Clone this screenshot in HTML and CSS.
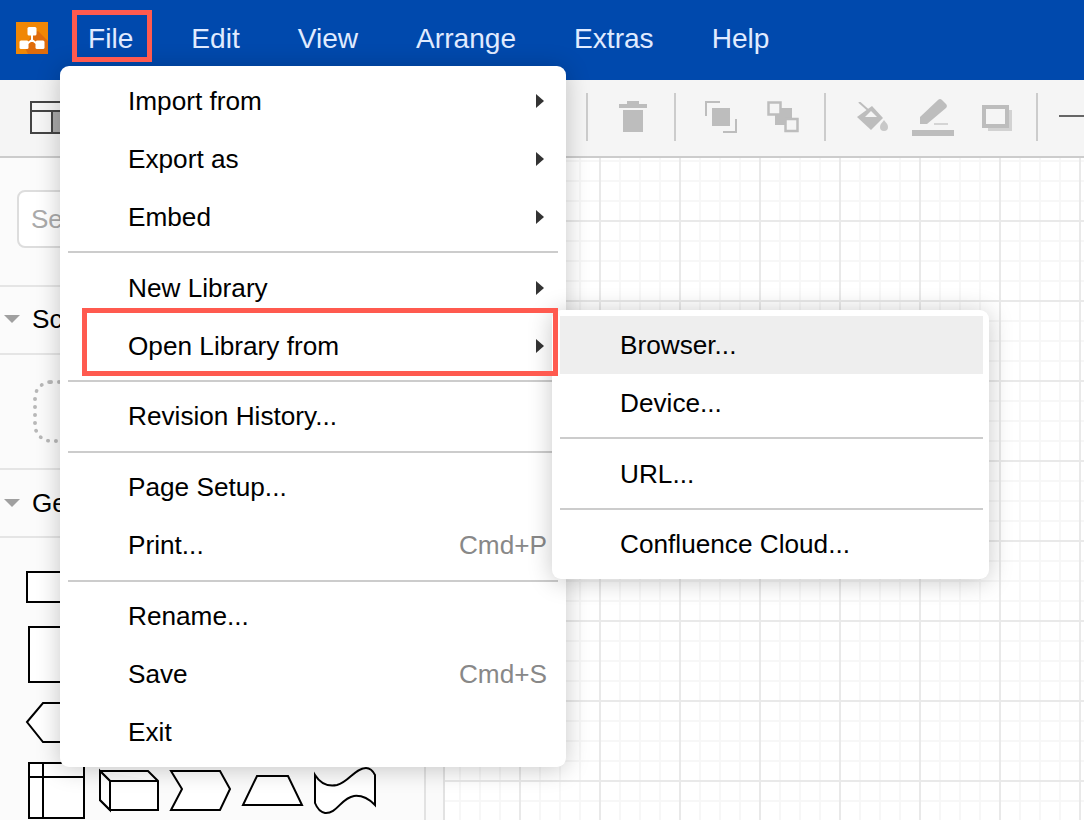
FILE: index.html
```html
<!DOCTYPE html>
<html lang="en">
<head>
  <meta charset="UTF-8" />
  <title>draw.io - File menu</title>
  <link rel="stylesheet" href="styles.css">
</head>
<body>
  <header class="menubar">
    <svg class="logo" width="32" height="32" viewBox="0 0 32 32">
      <rect width="32" height="32" fill="#f08705"/>
      <path d="M32 32H12L9 26l7-14 6-3 10 10z" fill="#df6c0c"/>
      <path d="M16 13v7M8 24l8-6 8 6" fill="none" stroke="#fff" stroke-width="2"/>
      <rect x="11.500" y="5" width="9" height="8.500" rx="1.500" fill="#fff"/>
      <rect x="3.500" y="18.500" width="9" height="8.500" rx="1.500" fill="#fff"/>
      <rect x="19.500" y="18.500" width="9" height="8.500" rx="1.500" fill="#fff"/>
    </svg>
    <nav class="menubar-items">
      <span>File</span>
      <span>Edit</span>
      <span>View</span>
      <span>Arrange</span>
      <span>Extras</span>
      <span>Help</span>
    </nav>
  </header>

  <div class="toolbar">
    <svg class="tool-view" width="40" height="36" viewBox="0 0 40 36">
      <rect x="22" y="11" width="18" height="22" fill="#aaa"/>
      <path d="M1 2h38v31H1zM1 11h38M22 11v22" fill="none" stroke="#444" stroke-width="2"/>
    </svg>
    <i class="tb-sep sep-a"></i>
    <svg class="tool-trash" width="28" height="32" viewBox="0 0 28 32">
      <path d="M8 1h12v3h8v4H0V4h8zM4 10h20v22H4z" fill="#bdbdbd"/>
    </svg>
    <i class="tb-sep sep-b"></i>
    <svg class="tool-front" width="32" height="32" viewBox="0 0 32 32">
      <path d="M15 1H1v14M31 18v13H18" fill="none" stroke="#bdbdbd" stroke-width="2"/>
      <rect x="7" y="7" width="18" height="18" fill="#bdbdbd"/>
    </svg>
    <svg class="tool-back" width="32" height="32" viewBox="0 0 32 32">
      <rect x="8" y="7" width="17" height="17" fill="#bdbdbd"/>
      <rect x="1.500" y="1.500" width="12" height="12" fill="#f5f5f5" stroke="#bdbdbd" stroke-width="2.500"/>
      <rect x="18.500" y="18" width="12" height="12" fill="#f5f5f5" stroke="#bdbdbd" stroke-width="2.500"/>
    </svg>
    <i class="tb-sep sep-c"></i>
    <svg class="tool-fill" width="33" height="29" viewBox="0 0 33 29">
      <path d="M3 0l9 8" fill="none" stroke="#bdbdbd" stroke-width="2"/>
      <path d="M16 4l11 12-12 12L1 15z" fill="#bdbdbd"/>
      <path d="M15 9l6 6H9z" fill="#f5f5f5"/>
      <path d="M28 18c2 3 4 4 4 7a4 4 0 0 1-8 0c0-3 2-4 4-7z" fill="#c8c8c8"/>
    </svg>
    <svg class="tool-line" width="42" height="37" viewBox="0 0 42 37">
      <rect y="31" width="42" height="6" fill="#bdbdbd"/>
      <path d="M8 25v-7L26 1a3 3 0 0 1 4 0l4 4a3 3 0 0 1 0 4L15 25z" fill="#bdbdbd"/>
      <path d="M22 25h14" stroke="#c8c8c8" stroke-width="1.500"/>
    </svg>
    <svg class="tool-shadow" width="31" height="26" viewBox="0 0 31 26">
      <path d="M6 26h24V5h-4v15H6z" fill="#d2d2d2"/>
      <rect x="2" y="2" width="23" height="19" fill="none" stroke="#bdbdbd" stroke-width="4"/>
    </svg>
    <i class="tb-sep sep-d"></i>
    <div class="tool-conn"></div>
  </div>

  <div class="main">
    <aside class="sidebar">
      <div class="search-wrap">
        <div class="search">Search</div>
      </div>
      <div class="section-head"><i class="caret"></i>Scratchpad</div>
      <div class="scratch">
        <div class="scratch-drop"></div>
      </div>
      <div class="section-head"><i class="caret"></i>General</div>
      <div class="shapes">
        <svg class="row-a" width="400" height="34" viewBox="0 570 400 34">
          <rect x="27" y="572" width="120" height="30"/>
        </svg>
        <svg class="row-b" width="400" height="59" viewBox="0 625 400 59">
          <rect x="29" y="627" width="80" height="55"/>
        </svg>
        <svg class="row-c" width="400" height="43" viewBox="0 701 400 43">
          <path d="M27 722l16-19h60l16 19-16 20H43z"/>
        </svg>
        <svg class="row-d" width="400" height="59" viewBox="0 761 400 59">
          <path d="M29 763h55v55H29zM29 777h55M43 763v55"/>
          <path d="M100 771l10 10v29l-10-10z" class="shape-side"/>
          <path d="M100 771h48l10 10v29h-48l-10-10zM100 771l10 10h48M110 781v29"/>
          <path d="M171 771h49l10 18-10 21h-49l11-21z"/>
          <path d="M243 805l14-29h31l14 29z"/>
          <path d="M315 775c5 8 12 12 22 10 12-3 18-17 29-17 4 0 7 3 9 7v30c-6-6-12-10-21-9-13 2-17 18-29 17-5-1-8-5-10-10z"/>
        </svg>
      </div>
    </aside>
    <div class="splitter"></div>
    <div class="canvas"></div>
  </div>

  <div class="menu file-menu">
    <div class="menu-item">Import from<i class="arrow"></i></div>
    <div class="menu-item">Export as<i class="arrow"></i></div>
    <div class="menu-item">Embed<i class="arrow"></i></div>
    <div class="menu-sep"></div>
    <div class="menu-item">New Library<i class="arrow"></i></div>
    <div class="menu-item">Open Library from<i class="arrow"></i></div>
    <div class="menu-sep"></div>
    <div class="menu-item">Revision History...</div>
    <div class="menu-sep"></div>
    <div class="menu-item">Page Setup...</div>
    <div class="menu-item">Print...<span class="shortcut">Cmd+P</span></div>
    <div class="menu-sep"></div>
    <div class="menu-item">Rename...</div>
    <div class="menu-item">Save<span class="shortcut">Cmd+S</span></div>
    <div class="menu-item">Exit</div>
  </div>

  <div class="menu sub-menu">
    <div class="menu-item active">Browser...</div>
    <div class="menu-item">Device...</div>
    <div class="menu-sep"></div>
    <div class="menu-item">URL...</div>
    <div class="menu-sep"></div>
    <div class="menu-item">Confluence Cloud...</div>
  </div>

  <div class="callout callout-file"></div>
  <div class="callout callout-open"></div>
</body>
</html>
```

FILE: styles.css
```css
* {
  box-sizing: border-box;
}
body {
  margin: 0;
  width: 1084px;
  height: 820px;
  overflow: hidden;
  position: relative;
  font-family: "Liberation Sans", Arial, sans-serif;
  background-color: #fff;
  color: #000;
}

/* top bar */
.menubar {
  height: 80px;
  background-color: #0049ad;
  display: flex;
  align-items: center;
  padding-left: 16px;
}
.logo {
  flex-shrink: 0;
  margin-top: -4px;
}
.menubar-items {
  display: flex;
  gap: 58px;
  margin-left: 40px;
  font-size: 28.100px;
  color: #e0ebff;
  margin-top: -3px;
}

/* toolbar */
.toolbar {
  height: 78px;
  background-color: #f5f5f5;
  border-bottom: 2px solid #ccc;
  display: flex;
  align-items: center;
  padding-left: 30px;
  overflow: hidden;
}
.toolbar svg {
  flex-shrink: 0;
  display: block;
}
.tb-sep {
  flex-shrink: 0;
  width: 2px;
  height: 48px;
  background-color: #ccc;
  margin-top: -2px;
}
.tool-view { margin-top: -1px; }
.sep-a { margin-left: 516px; }
.tool-trash { margin-left: 31px; margin-top: -4px; }
.sep-b { margin-left: 27px; }
.tool-front { margin-left: 29px; margin-top: -2px; }
.tool-back { margin-left: 30px; margin-top: -2px; }
.sep-c { margin-left: 25px; }
.tool-fill { margin-left: 30px; margin-top: -4px; }
.tool-line { margin-left: 23px; margin-top: -2px; }
.tool-shadow { margin-left: 28px; margin-top: 0; }
.sep-d { margin-left: 23px; }
.tool-conn {
  flex-shrink: 0;
  width: 25px;
  height: 2px;
  margin-left: 21px;
  margin-top: -4px;
  background-color: #666;
}

/* main area */
.main {
  display: flex;
  height: 662px;
}
.sidebar {
  width: 426px;
  background-color: #fbfbfb;
  border-right: 2px solid #e2e2e2;
  overflow: hidden;
}
.search-wrap {
  height: 127px;
  padding: 32px 0 0 17px;
}
.search {
  width: 380px;
  height: 58px;
  border: 2px solid #ddd;
  border-radius: 8px;
  background-color: #fff;
  padding-left: 12px;
  line-height: 54px;
  font-size: 26px;
  color: #aaa;
}
.section-head {
  height: 70px;
  border-top: 2px solid #e5e5e5;
  border-bottom: 2px solid #e5e5e5;
  display: flex;
  align-items: center;
  padding: 0 0 2px 4px;
  font-size: 26.200px;
}
.scratch + .section-head {
  padding-bottom: 0;
}
.caret {
  width: 0;
  height: 0;
  border-left: 8px solid transparent;
  border-right: 8px solid transparent;
  border-top: 8px solid #a0a0a0;
  margin-right: 12px;
}
.scratch {
  height: 113px;
  padding: 25px 0 0 33px;
}
.scratch-drop {
  width: 360px;
  height: 63px;
  border: 4px dotted #b8b8b8;
  border-radius: 18px;
}
.shapes {
  padding-top: 32px;
}
.shapes svg {
  display: block;
  fill: #fff;
  stroke: #000;
  stroke-width: 2;
}
.shapes .shape-side {
  fill: #e6e6e6;
}
.row-a { margin-bottom: 21px; }
.row-b { margin-bottom: 17px; }
.row-c { margin-bottom: 17px; }
.splitter {
  width: 19px;
  background-color: #fafafa;
  border-right: 2px solid #e2e2e2;
}
.canvas {
  flex: 1;
  background-color: #fff;
  background-image:
    linear-gradient(to right, #e9e9e9 2px, transparent 2px),
    linear-gradient(to bottom, #e9e9e9 2px, transparent 2px),
    linear-gradient(to right, #f7f7f7 2px, transparent 2px),
    linear-gradient(to bottom, #f7f7f7 2px, transparent 2px);
  background-size: 80px 80px, 80px 80px, 20px 20px, 20px 20px;
  background-position: 74px 0, 0 62px, 14px 0, 0 2px;
}

/* dropdown menus */
.menu {
  position: absolute;
  background-color: #fff;
  border-radius: 9px;
  box-shadow: 0 2px 24px rgba(0, 0, 0, 0.22);
  padding: 6px 8px;
  font-size: 26.200px;
}
.file-menu {
  left: 60px;
  top: 66px;
  width: 506px;
  height: 701px;
}
.sub-menu {
  left: 552px;
  top: 310px;
  width: 437px;
  height: 269px;
  padding: 6px 6px 5px 8px;
}
.menu-item {
  height: 58px;
  display: flex;
  align-items: center;
  justify-content: space-between;
  padding: 0 11px 0 60px;
}
.menu-sep ~ .menu-sep ~ .menu-item {
  padding-bottom: 2px;
}
.menu-item.active {
  background-color: #eee;
}
.menu-sep {
  height: 2px;
  margin: 5px 0 6px;
  background-color: #ccc;
}
.arrow {
  width: 0;
  height: 0;
  border-left: 8px solid #333;
  border-top: 7px solid transparent;
  border-bottom: 7px solid transparent;
  margin-right: 3px;
}
.shortcut {
  color: #888;
}

/* red annotation boxes */
.callout {
  position: absolute;
  border: 5px solid #ff5a4f;
}
.callout-file {
  left: 72px;
  top: 10px;
  width: 80px;
  height: 52px;
}
.callout-open {
  left: 82px;
  top: 308px;
  width: 476px;
  height: 68px;
}
```
